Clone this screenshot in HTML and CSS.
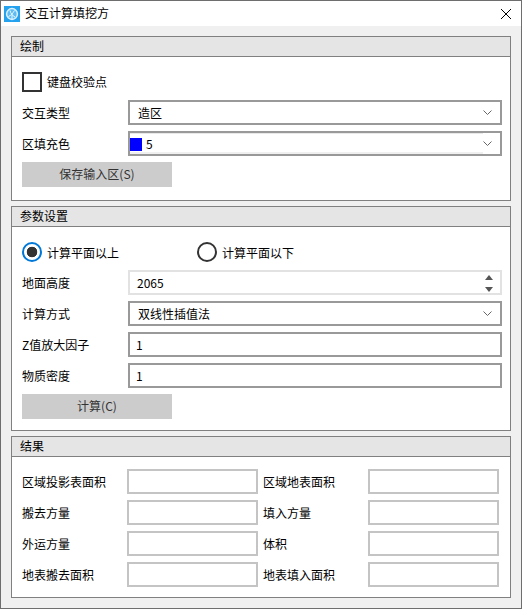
FILE: index.html
```html
<!DOCTYPE html>
<html lang="zh-CN">
<head>
    <meta charset="UTF-8">
    <meta name="viewport" content="width=device-width, initial-scale=1.0">
    <title>交互计算填挖方</title>
    <link rel="stylesheet" href="styles.css">
</head>
<body>
<div class="window">
    <div class="titlebar">
        <svg class="app-icon" width="16" height="16" viewBox="0 0 16 16">
            <rect width="16" height="16" fill="#25a2ee"/>
            <circle cx="8" cy="8" r="5.4" fill="#5dbcf3" stroke="#d9f0fc" stroke-width="1.5"/>
            <path d="M4.500 10.500 C7 9.500 9 7 10.500 4.500 M6 4.500 C6.500 7 8.500 10 11 11 M8 8 V13" stroke="#eef8fe" stroke-width="1" fill="none"/>
        </svg>
        <span class="title">交互计算填挖方</span>
        <svg class="close" width="10" height="10" viewBox="0 0 10 10">
            <path d="M0 0 L10 10 M10 0 L0 10" stroke="#000" stroke-width="1" fill="none"/>
        </svg>
    </div>

    <div class="content">
        <section class="panel panel-draw">
            <h2>绘制</h2>
            <div class="panel-body">
                <div class="check-row">
                    <span class="checkbox"></span>
                    <span class="check-label">键盘校验点</span>
                </div>
                <div class="form-row">
                    <label>交互类型</label>
                    <div class="field select">
                        <span>造区</span>
                        <svg class="chevron" width="9" height="5" viewBox="0 0 9 5"><path d="M0.500 0.500 L4.500 4.500 L8.500 0.500" stroke="#666" fill="none"/></svg>
                    </div>
                </div>
                <div class="form-row">
                    <label>区填充色</label>
                    <div class="field select color-select">
                        <div class="color-item">
                            <span class="swatch"></span>
                            <span>5</span>
                        </div>
                        <svg class="chevron" width="9" height="5" viewBox="0 0 9 5"><path d="M0.500 0.500 L4.500 4.500 L8.500 0.500" stroke="#666" fill="none"/></svg>
                    </div>
                </div>
                <div class="btn">保存输入区(S)</div>
            </div>
        </section>

        <section class="panel panel-params">
            <h2>参数设置</h2>
            <div class="panel-body">
                <div class="radio-row">
                    <div class="radio-item">
                        <span class="radio on"></span>
                        <span>计算平面以上</span>
                    </div>
                    <div class="radio-item">
                        <span class="radio"></span>
                        <span>计算平面以下</span>
                    </div>
                </div>
                <div class="form-row">
                    <label>地面高度</label>
                    <div class="field spin">
                        <span>2065</span>
                        <svg class="spin-arrows" width="8" height="17" viewBox="0 0 8 17">
                            <path d="M4 0 L8 5 H0 Z" fill="#555"/>
                            <path d="M0 12 H8 L4 17 Z" fill="#555"/>
                        </svg>
                    </div>
                </div>
                <div class="form-row">
                    <label>计算方式</label>
                    <div class="field select">
                        <span>双线性插值法</span>
                        <svg class="chevron" width="9" height="5" viewBox="0 0 9 5"><path d="M0.500 0.500 L4.500 4.500 L8.500 0.500" stroke="#666" fill="none"/></svg>
                    </div>
                </div>
                <div class="form-row">
                    <label>Z值放大因子</label>
                    <div class="field text">1</div>
                </div>
                <div class="form-row">
                    <label>物质密度</label>
                    <div class="field text">1</div>
                </div>
                <div class="btn">计算(C)</div>
            </div>
        </section>

        <section class="panel">
            <h2>结果</h2>
            <div class="panel-body result-grid">
                <label>区域投影表面积</label><div class="result-box"></div>
                <label>区域地表面积</label><div class="result-box"></div>
                <label>搬去方量</label><div class="result-box"></div>
                <label>填入方量</label><div class="result-box"></div>
                <label>外运方量</label><div class="result-box"></div>
                <label>体积</label><div class="result-box"></div>
                <label>地表搬去面积</label><div class="result-box"></div>
                <label>地表填入面积</label><div class="result-box"></div>
            </div>
        </section>
    </div>
</div>
</body>
</html>
```

FILE: styles.css
```css
* {
    box-sizing: border-box;
}
body {
    margin: 0;
    font-family: "Noto Sans CJK SC", "Noto Sans", sans-serif;
    font-size: 12px;
    color: #000;
}
.window {
    width: 522px;
    height: 609px;
    border: 1px solid #6e6e6e;
    background-color: #f0f0f0;
    display: flex;
    flex-direction: column;
}

/* タイトルバー */
.titlebar {
    height: 25px;
    background-color: #fff;
    display: flex;
    align-items: center;
    padding: 0 10px 0 3px;
}
.app-icon {
    margin-right: 5px;
}
.title {
    flex: 1;
    margin-top: -3px;
}

.content {
    padding: 10px 10px 0;
    display: flex;
    flex-direction: column;
    gap: 5px;
}
.panel {
    border: 1px solid #808080;
    background-color: #fff;
}
.panel h2 {
    margin: 0;
    height: 20px;
    line-height: 18px;
    padding-left: 8px;
    font-size: 12px;
    font-weight: normal;
    background-color: #e5e5e5;
    border-bottom: 1px solid #808080;
}
.panel-body {
    padding: 15px 8px 12px 10px;
    display: flex;
    flex-direction: column;
    gap: 6px;
}
.panel-draw .panel-body {
    padding-bottom: 13px;
}
.panel-params .panel-body {
    padding-bottom: 11px;
}

.check-row, .radio-row {
    display: flex;
    align-items: center;
    height: 20px;
    margin-bottom: 2px;
}
.checkbox {
    width: 20px;
    height: 20px;
    border: 2px solid #333;
    margin-right: 5px;
}
.check-label {
    margin-top: -2px;
}
.radio-item {
    display: flex;
    align-items: center;
    width: 175px;
}
.radio {
    width: 20px;
    height: 20px;
    border: 2px solid #333;
    border-radius: 50%;
    margin-right: 5px;
}
.radio.on {
    border-color: #0078d7;
    background: radial-gradient(circle, #333 0, #333 5px, #fff 5.6px);
}

.form-row {
    display: grid;
    grid-template-columns: 106px 374px;
    align-items: center;
    height: 25px;
}
.field {
    height: 25px;
    border: 2px solid #999;
    display: flex;
    align-items: center;
    justify-content: space-between;
    background-color: #fff;
}
.select {
    padding: 0 8px;
}
.text {
    padding-left: 6px;
}
.spin {
    border-color: #e2e2e2;
    padding: 0 7px;
}
.spin-arrows {
    margin-top: 2px;
}
.color-select {
    padding-left: 0;
}
.color-item {
    flex: 1;
    align-self: stretch;
    display: flex;
    align-items: center;
    border-top: 1px solid #e8e8e8;
    border-bottom: 2px solid #f0f0f0;
}
.swatch {
    width: 12px;
    height: 13px;
    margin: 2px 4px 0 0;
    background-color: #0000ff;
}
.btn {
    width: 150px;
    height: 25px;
    line-height: 24px;
    text-align: center;
    background-color: #ccc;
    color: #333;
}

.result-grid {
    display: grid;
    grid-template-columns: 105px 131px 110px 131px;
    gap: 6px 0;
    align-items: center;
    padding-top: 12px;
    padding-bottom: 10px;
}
.result-box {
    height: 25px;
    border: 2px solid #c4c4c4;
}
.result-grid label:nth-child(4n+3) {
    padding-left: 5px;
}
```
